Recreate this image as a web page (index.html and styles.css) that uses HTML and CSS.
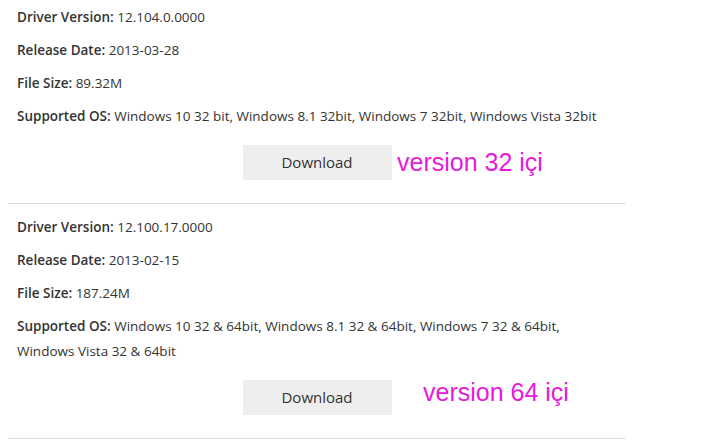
FILE: index.html
```html
<!DOCTYPE html>
<html lang="en">
<head>
    <meta charset="UTF-8">
    <title>Driver Downloads</title>
    <link rel="stylesheet" href="styles.css">
</head>
<body>
    <div class="driver-list">
        <div class="driver-item">
            <p><b>Driver Version:</b> 12.104.0.0000</p>
            <p><b>Release Date:</b> 2013-03-28</p>
            <p><b>File Size:</b> 89.32M</p>
            <p><b>Supported OS:</b> Windows 10 32 bit, Windows 8.1 32bit, Windows 7 32bit, Windows Vista 32bit</p>
            <div class="download-row">
                <a class="download-btn" href="#">Download</a>
                <span class="note note-32">version 32 içi</span>
            </div>
        </div>
        <div class="driver-item">
            <p><b>Driver Version:</b> 12.100.17.0000</p>
            <p><b>Release Date:</b> 2013-02-15</p>
            <p><b>File Size:</b> 187.24M</p>
            <p><b>Supported OS:</b> Windows 10 32 &amp; 64bit, Windows 8.1 32 &amp; 64bit, Windows 7 32 &amp; 64bit, Windows Vista 32 &amp; 64bit</p>
            <div class="download-row">
                <a class="download-btn" href="#">Download</a>
                <span class="note note-64">version 64 içi</span>
            </div>
        </div>
    </div>
</body>
</html>
```
FILE: styles.css
```css
* {
    margin: 0;
    padding: 0;
    box-sizing: border-box;
}

body {
    background: #fff;
    font-family: 'Open Sans', 'Noto Sans', sans-serif;
    color: #333;
    font-size: 13.5px;
}

.driver-list {
    width: 618px;
    margin-left: 8px;
    margin-top: 5px;
}

.driver-item {
    padding: 0 9px 23px;
    border-bottom: 1px solid #ddd;
    margin-bottom: 11px;
}

.driver-item p {
    line-height: 25px;
    margin-bottom: 8px;
}

.driver-item b {
    font-weight: 600;
}

.download-row {
    position: relative;
    display: flex;
    justify-content: center;
    padding-top: 8px;
}

.download-btn {
    display: block;
    width: 149px;
    height: 35px;
    line-height: 35px;
    text-align: center;
    background: #eee;
    color: #333;
    font-size: 15px;
    text-decoration: none;
}

.note {
    position: absolute;
    color: #e619dc;
    font-size: 25px;
    font-family: 'Liberation Sans', sans-serif;
}

.note-32 {
    left: 380px;
    top: 11px;
}

.note-64 {
    left: 406px;
    top: 6px;
}
```
